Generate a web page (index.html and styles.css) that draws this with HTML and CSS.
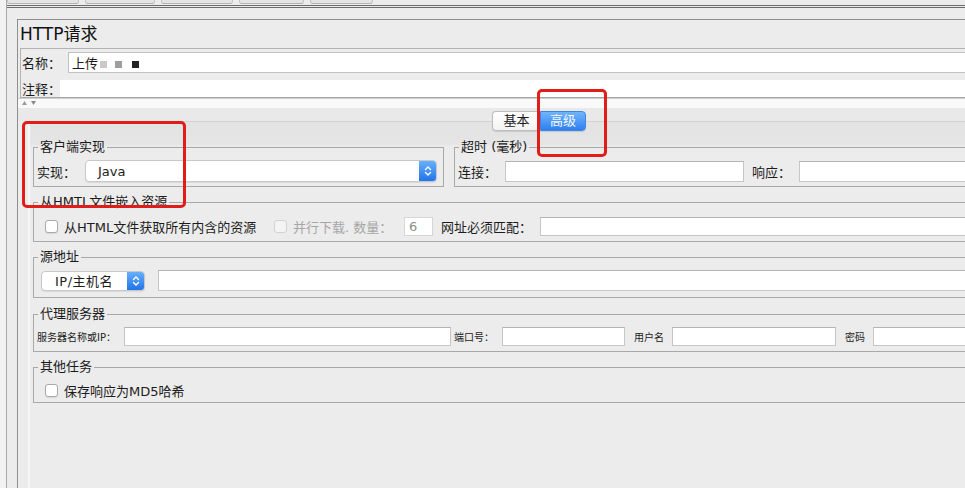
FILE: index.html
```html
<!DOCTYPE html>
<html lang="zh">
<head>
<meta charset="utf-8">
<title>HTTP请求</title>
<link rel="stylesheet" href="styles.css">
</head>
<body>
<div class="app">
  <div class="leftcol"></div>
  <div class="main">
    <div class="topstrip">
      <span class="tb tb1"></span><span class="tb tb2"></span><span class="tb tb3"></span><span class="tb tb4"></span><span class="tb tb5"></span>
    </div>
    <div class="body">
      <div class="panel">
        <div class="title">HTTP请求</div>
        <div class="namebox">
          <div class="row namerow">
            <span class="lbl lbl-name">名称：</span>
            <div class="field namefield">上传<span class="blot blot1"></span><span class="blot blot2"></span><span class="blot blot3"></span></div>
          </div>
          <div class="row commentrow">
            <span class="lbl lbl-comment">注释：</span>
            <div class="field commentfield"></div>
          </div>
        </div>
        <div class="splitter">
          <svg class="arrows" width="16" height="6" viewBox="0 0 16 6"><path d="M0 5 L2.5 1 L5 5 Z" fill="#9a9a9a"/><path d="M9 1 L14 1 L11.5 5 Z" fill="#8a8a8a"/></svg>
        </div>
        <div class="tabhead"></div>
        <div class="tabpane">
          <div class="tabstrip">
            <div class="segmented">
              <span class="seg-btn">基本</span><span class="seg-btn active">高级</span>
            </div>
          </div>

          <div class="grouprow">
            <fieldset class="group g-client">
              <legend>客户端实现</legend>
              <div class="gbody gb-client">
                <span class="lbl w-impl">实现：</span>
                <div class="select sel-java">
                  <span class="sel-text">Java</span>
                  <span class="sel-arrow"><svg width="8" height="12" viewBox="0 0 8 12"><path d="M1.5 4.6 L4 2.1 L6.5 4.6 M1.5 7.4 L4 9.9 L6.5 7.4" stroke="#fff" stroke-width="1.4" fill="none" stroke-linecap="round" stroke-linejoin="round"/></svg></span>
                </div>
              </div>
            </fieldset>
            <fieldset class="group g-timeout open">
              <legend>超时 (毫秒)</legend>
              <div class="gbody gb-timeout">
                <span class="lbl w-conn">连接：</span>
                <div class="input in-conn"></div>
                <span class="lbl w-resp">响应：</span>
                <div class="input in-resp open"></div>
              </div>
            </fieldset>
          </div>

          <fieldset class="group g-embed open">
            <legend>从HMTL文件嵌入资源</legend>
            <div class="gbody gb-embed">
              <span class="cb"></span>
              <span class="cb-label w-embed">从HTML文件获取所有内含的资源</span>
              <span class="cb cb-disabled"></span>
              <span class="cb-label dim w-par">并行下载. 数量：</span>
              <div class="input in-num">6</div>
              <span class="lbl w-url">网址必须匹配：</span>
              <div class="input in-url open"></div>
            </div>
          </fieldset>

          <fieldset class="group g-src open">
            <legend>源地址</legend>
            <div class="gbody gb-src">
              <div class="select sel-ip">
                <span class="sel-text">IP/主机名</span>
                <span class="sel-arrow"><svg width="8" height="12" viewBox="0 0 8 12"><path d="M1.5 4.6 L4 2.1 L6.5 4.6 M1.5 7.4 L4 9.9 L6.5 7.4" stroke="#fff" stroke-width="1.4" fill="none" stroke-linecap="round" stroke-linejoin="round"/></svg></span>
              </div>
              <div class="input in-src open"></div>
            </div>
          </fieldset>

          <fieldset class="group g-proxy open">
            <legend>代理服务器</legend>
            <div class="gbody gb-proxy">
              <span class="lbl small w-host">服务器名称或IP：</span>
              <div class="input in-host"></div>
              <span class="lbl small w-port">端口号：</span>
              <div class="input in-port"></div>
              <span class="lbl small w-user">用户名</span>
              <div class="input in-user"></div>
              <span class="lbl small w-pass">密码</span>
              <div class="input in-pass open"></div>
            </div>
          </fieldset>

          <fieldset class="group g-other open">
            <legend>其他任务</legend>
            <div class="gbody gb-other">
              <span class="cb"></span>
              <span class="cb-label">保存响应为MD5哈希</span>
            </div>
          </fieldset>
        </div>
      </div>
    </div>
  </div>
  <div class="annot annot-client"></div>
  <div class="annot annot-tab"></div>
</div>
</body>
</html>
```

FILE: styles.css
```css
html, body {
  margin: 0;
  padding: 0;
  overflow: hidden;
  background: #ececec;
}
body {
  font-family: "DejaVu Sans", "Noto Sans CJK SC", sans-serif;
  font-size: 13px;
  color: #1c1c1c;
}
.app {
  position: relative;
  display: flex;
  width: 965px;
  height: 488px;
  overflow: hidden;
}
.leftcol {
  flex: none;
  width: 6px;
  background: #f2f2f2;
  border-right: 1px solid #a9a9a9;
}
.main {
  flex: 1;
  display: flex;
  flex-direction: column;
  min-width: 0;
}
.topstrip {
  flex: none;
  height: 5px;
  border-bottom: 3px double #6c6c6c;
  display: flex;
  gap: 6px;
}
.tb {
  height: 3px;
  background: #e4e4e4;
  border-bottom: 1px solid #b3b3b3;
  border-left: 1px solid #c4c4c4;
  border-right: 1px solid #c4c4c4;
  border-radius: 0 0 3px 3px;
}
.tb1 { width: 70px; }
.tb2 { width: 68px; }
.tb3 { width: 70px; }
.tb4 { width: 63px; }
.tb5 { width: 61px; }
.body {
  flex: 1;
  display: flex;
  flex-direction: column;
  padding: 11px 0 0 10px;
}
.panel {
  flex: 1;
  display: flex;
  flex-direction: column;
  border-top: 1px solid #8e8e8e;
  border-left: 1px solid #8e8e8e;
}
.title {
  height: 28px;
  line-height: 28px;
  padding-left: 2px;
  font-size: 17px;
  color: #111;
}
.namebox {
  margin-left: 2px;
  padding-top: 3px;
  border-top: 1px solid #b3b3b3;
  border-left: 1px solid #b3b3b3;
  border-bottom: 1px solid #a6a6a6;
}
.row {
  display: flex;
  align-items: center;
}
.namerow { height: 21px; }
.commentrow { height: 17px; margin-top: 7px; }
.lbl {
  flex: none;
  white-space: nowrap;
}
.lbl-name { width: 46px; padding-left: 1px; }
.lbl-comment { width: 38px; padding-left: 1px; }
.field {
  flex: 1;
  align-self: stretch;
  background: #fff;
}
.namefield {
  display: flex;
  align-items: center;
  padding-left: 3px;
  border: 1px solid #c3c3c3;
  border-right: none;
}
.blot {
  display: inline-block;
  width: 7px;
  height: 7px;
  margin-top: 3px;
}
.blot1 { background: #c9c9c9; margin-left: 2px; }
.blot2 { background: #9d9d9d; margin-left: 8px; }
.blot3 { background: #222; margin-left: 10px; }
.splitter {
  height: 9px;
  border-top: 1px solid #cfcfcf;
  background: #f9f9f9;
  padding-left: 4px;
}
.arrows { display: block; margin-top: 1px; }
.tabhead {
  height: 13px;
  background: #e9e9e9;
}
.tabpane {
  flex: 1;
  margin-left: 10px;
  padding-left: 3px;
  border-top: 1px solid #d2d2d2;
  border-left: 2px solid #f6f6f6;
  background: linear-gradient(#e3e3e3 0, #e5e5e5 22px, #ececec 25px);
}
.tabstrip {
  display: flex;
  height: 20px;
  margin-top: -11px;
  padding-left: 459px;
}
.segmented {
  display: flex;
  height: 20px;
  border-radius: 4px;
  box-shadow: 0 1px 1px rgba(0, 0, 0, 0.12);
}
.seg-btn {
  box-sizing: border-box;
  width: 48px;
  height: 20px;
  line-height: 18px;
  text-align: center;
  background: linear-gradient(#ffffff, #f3f3f3);
  border: 1px solid #bdbdbd;
  border-right: none;
  border-radius: 4px 0 0 4px;
  color: #1a1a1a;
}
.seg-btn.active {
  width: 46px;
  color: #f4f8ff;
  background: linear-gradient(#70b5fb, #2e80f0);
  border: 1px solid #3c86ea;
  border-radius: 0 4px 4px 0;
}
.grouprow {
  display: flex;
  margin-top: 9px;
}
.group {
  box-sizing: border-box;
  margin: 0;
  padding: 0;
  min-width: 0;
  border: 1px solid #a9a9a9;
}
.group.open { border-right: none; }
.group legend {
  margin-left: 4px;
  padding: 0 2px;
  font-size: 13px;
  line-height: 14px;
  color: #1a1a1a;
}
.g-client { flex: none; width: 411px; }
.g-timeout { flex: 1; margin-left: 10px; }
.g-embed { margin-top: 8px; }
.g-src { margin-top: 8px; }
.g-proxy { margin-top: 9px; }
.g-other { margin-top: 8px; }
.gbody {
  display: flex;
  align-items: center;
}
.gb-client, .gb-timeout { padding: 6px 0 4px 3px; height: 22px; }
.gb-embed { padding: 8px 0 5px 11px; height: 19px; }
.gb-src { padding: 6px 0 6px 7px; height: 21px; }
.gb-proxy { padding: 6px 0 5px 3px; height: 19px; }
.gb-other { padding: 8px 0 4px 11px; height: 16px; }
.w-impl { width: 48px; }
.w-conn { width: 47px; }
.w-resp { width: 47px; margin-left: 8px; }
.w-url { width: 99px; margin-left: 8px; }
.small { font-size: 10px; color: #222; }
.w-host { width: 87px; }
.w-port { width: 48px; margin-left: 3px; }
.w-user { width: 38px; margin-left: 9px; }
.w-pass { width: 28px; margin-left: 9px; }
.select {
  box-sizing: border-box;
  display: flex;
  align-items: center;
  background: #fff;
  border: 1px solid #c8c8c8;
  border-radius: 4px;
  overflow: hidden;
  box-shadow: 0 1px 1px rgba(0, 0, 0, 0.08);
}
.sel-text {
  flex: 1;
  white-space: nowrap;
}
.sel-arrow {
  flex: none;
  align-self: stretch;
  width: 17px;
  display: flex;
  align-items: center;
  justify-content: center;
  background: linear-gradient(#68b0fc, #2174ea);
}
.sel-java { width: 352px; height: 22px; padding-left: 12px; }
.sel-ip { width: 104px; height: 20px; padding-left: 13px; letter-spacing: 0.5px; }
.input {
  box-sizing: border-box;
  flex: none;
  background: #fff;
  border: 1px solid #c6c6c6;
  border-top-color: #b4b4b4;
}
.input.open {
  flex: 1;
  min-width: 0;
  border-right: none;
}
.in-conn, .in-resp { width: 239px; height: 21px; }
.in-num {
  width: 29px;
  height: 19px;
  line-height: 17px;
  padding-left: 4px;
  color: #8c8c8c;
  border-color: #d6d6d6;
}
.in-url { height: 19px; }
.in-src { height: 21px; margin-left: 13px; }
.in-host { width: 327px; height: 19px; }
.in-port { width: 123px; height: 19px; }
.in-user { width: 164px; height: 19px; }
.in-pass { height: 19px; }
.cb {
  flex: none;
  box-sizing: border-box;
  width: 13px;
  height: 13px;
  margin-right: 6px;
  background: #fff;
  border: 1px solid #a9a9a9;
  border-radius: 3px;
  box-shadow: 0 1px 1px rgba(0, 0, 0, 0.08);
}
.cb-disabled {
  background: #f4f4f4;
  border-color: #d2d2d2;
  box-shadow: none;
}
.cb-label { white-space: nowrap; }
.w-embed { width: 210px; }
.w-par { width: 111px; }
.dim { color: #a6a6a6; }
.annot {
  position: absolute;
  box-sizing: border-box;
  border: 3px solid #e11d1a;
  border-radius: 5px;
  pointer-events: none;
}
.annot-client { left: 22px; top: 121px; width: 164px; height: 87px; }
.annot-tab { left: 537px; top: 89px; width: 70px; height: 68px; }
```
